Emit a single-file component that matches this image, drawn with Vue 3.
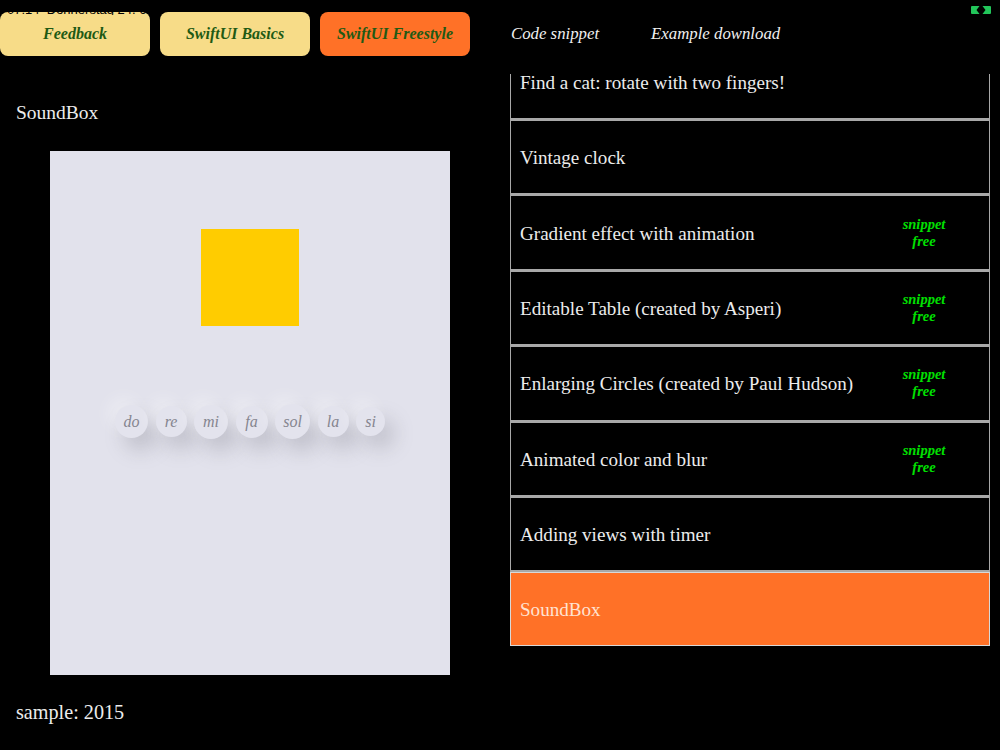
<script setup>
const tabs = [
  { label: 'Feedback', cls: 'tab' },
  { label: 'SwiftUI Basics', cls: 'tab' },
  { label: 'SwiftUI Freestyle', cls: 'tab active' }
]
const links = ['Code snippet', 'Example download']
const rows = [
  { t: 'Find a cat: rotate with two fingers!', cut: true },
  { t: 'Vintage clock' },
  { t: 'Gradient effect with animation', tag: true },
  { t: 'Editable Table (created by Asperi)', tag: true },
  { t: 'Enlarging Circles (created by Paul Hudson)', tag: true },
  { t: 'Animated color and blur', tag: true },
  { t: 'Adding views with timer' },
  { t: 'SoundBox', sel: true }
]
const notes = [
  { n: 'do', s: 33 }, { n: 're', s: 31 }, { n: 'mi', s: 34 }, { n: 'fa', s: 32 },
  { n: 'sol', s: 35 }, { n: 'la', s: 31 }, { n: 'si', s: 29 }
]
</script>

<template>
  <div class="page">
    <div class="status">07:14 &nbsp;Donnerstag 24. 6.</div>
    <svg class="mirror" width="20" height="8" viewBox="0 0 20 8">
      <path d="M1 0H8.500L5.500 4L8.500 8H1A1 1 0 0 1 0 7V1A1 1 0 0 1 1 0Z" fill="#22c55a" />
      <path d="M19 0H11.500L14.500 4L11.500 8H19A1 1 0 0 0 20 7V1A1 1 0 0 0 19 0Z" fill="#22c55a" />
    </svg>
    <nav class="nav">
      <div v-for="x in tabs" :key="x.label" :class="x.cls">{{ x.label }}</div>
      <div class="links">
        <div v-for="x in links" :key="x" class="link">{{ x }}</div>
      </div>
    </nav>
    <div class="main">
      <section class="left">
        <div class="title">SoundBox</div>
        <div class="canvas">
          <div class="square"></div>
          <div class="notes">
            <div
              v-for="x in notes"
              :key="x.n"
              class="note"
              :style="{ width: x.s + 'px', height: x.s + 'px' }"
            >{{ x.n }}</div>
          </div>
        </div>
        <div class="sample">sample: 2015</div>
      </section>
      <section class="list">
        <div v-for="r in rows" :key="r.t" class="row" :class="{ sel: r.sel, cut: r.cut }">
          <span>{{ r.t }}</span>
          <div v-if="r.tag" class="tag">snippet<br />free</div>
        </div>
      </section>
    </div>
  </div>
</template>

<style>
html, body { margin: 0; background: #000; }
</style>

<style scoped>
.page {
  position: relative;
  width: 1000px;
  height: 750px;
  background: #000;
  overflow: hidden;
  font-family: "Liberation Serif", serif;
  color: #ececec;
}
.status {
  position: absolute;
  z-index: 2;
  left: 7px;
  top: 2px;
  width: 140px;
  height: 13px;
  overflow: hidden;
  font: 13px/15px "Liberation Sans", sans-serif;
  color: #000;
  white-space: nowrap;
}
.mirror { position: absolute; left: 971px; top: 6px; }
.nav {
  display: flex;
  gap: 10px;
  padding-top: 12px;
  height: 44px;
}
.tab {
  width: 150px;
  border-radius: 8px;
  background: #f7dc88;
  color: #1f5a14;
  font: italic bold 16px/44px "Liberation Serif", serif;
  text-align: center;
  white-space: nowrap;
}
.tab.active { background: #ff7127; }
.links {
  display: flex;
  gap: 52px;
  padding-left: 31px;
}
.link {
  font: italic 16.8px/44px "Liberation Serif", serif;
  color: #f0f0f0;
  white-space: nowrap;
}
.main {
  display: flex;
  height: 676px;
  margin-top: 18px;
}
.left { width: 500px; }
.title {
  padding: 28px 0 0 16px;
  height: 49px;
  font-size: 19.5px;
  line-height: 22px;
}
.canvas {
  margin: 0 50px;
  width: 400px;
  height: 524px;
  background: #e2e2ec;
  display: flex;
  flex-direction: column;
  align-items: center;
}
.square {
  width: 98px;
  height: 97px;
  margin-top: 78px;
  background: #ffcc00;
}
.notes {
  display: flex;
  align-items: center;
  gap: 7.5px;
  margin-top: 78px;
}
.note {
  border-radius: 50%;
  background: #e3e3ed;
  box-shadow: 9px 12px 20px rgba(120, 120, 135, 0.33), -8px -8px 16px rgba(255, 255, 255, 0.3);
  color: #85858f;
  font: italic 16px/1 "Liberation Serif", serif;
  display: flex;
  align-items: center;
  justify-content: center;
}
.sample {
  padding: 26px 0 0 16px;
  font-size: 20.2px;
  line-height: 22px;
}
.list {
  width: 480px;
  margin-left: 10px;
  display: flex;
  flex-direction: column;
}
.row {
  box-sizing: border-box;
  height: 75.4px;
  flex: none;
  border: 1px solid #a8a8a8;
  border-bottom-width: 2px;
  display: flex;
  align-items: center;
  justify-content: space-between;
  padding: 2px 0 0 9px;
  font-size: 19.1px;
  white-space: nowrap;
}
.row.cut {
  height: 46px;
  border-top: none;
  padding: 0 0 27px 9px;
}
.row.sel {
  height: 74px;
  background: #ff7127;
  border: 1px solid #d8d8d8;
  color: #ffe3d2;
}
.tag {
  width: 130px;
  margin-top: -2px;
  text-align: center;
  color: #00e000;
  font: italic bold 14.5px/17px "Liberation Serif", serif;
}
</style>
